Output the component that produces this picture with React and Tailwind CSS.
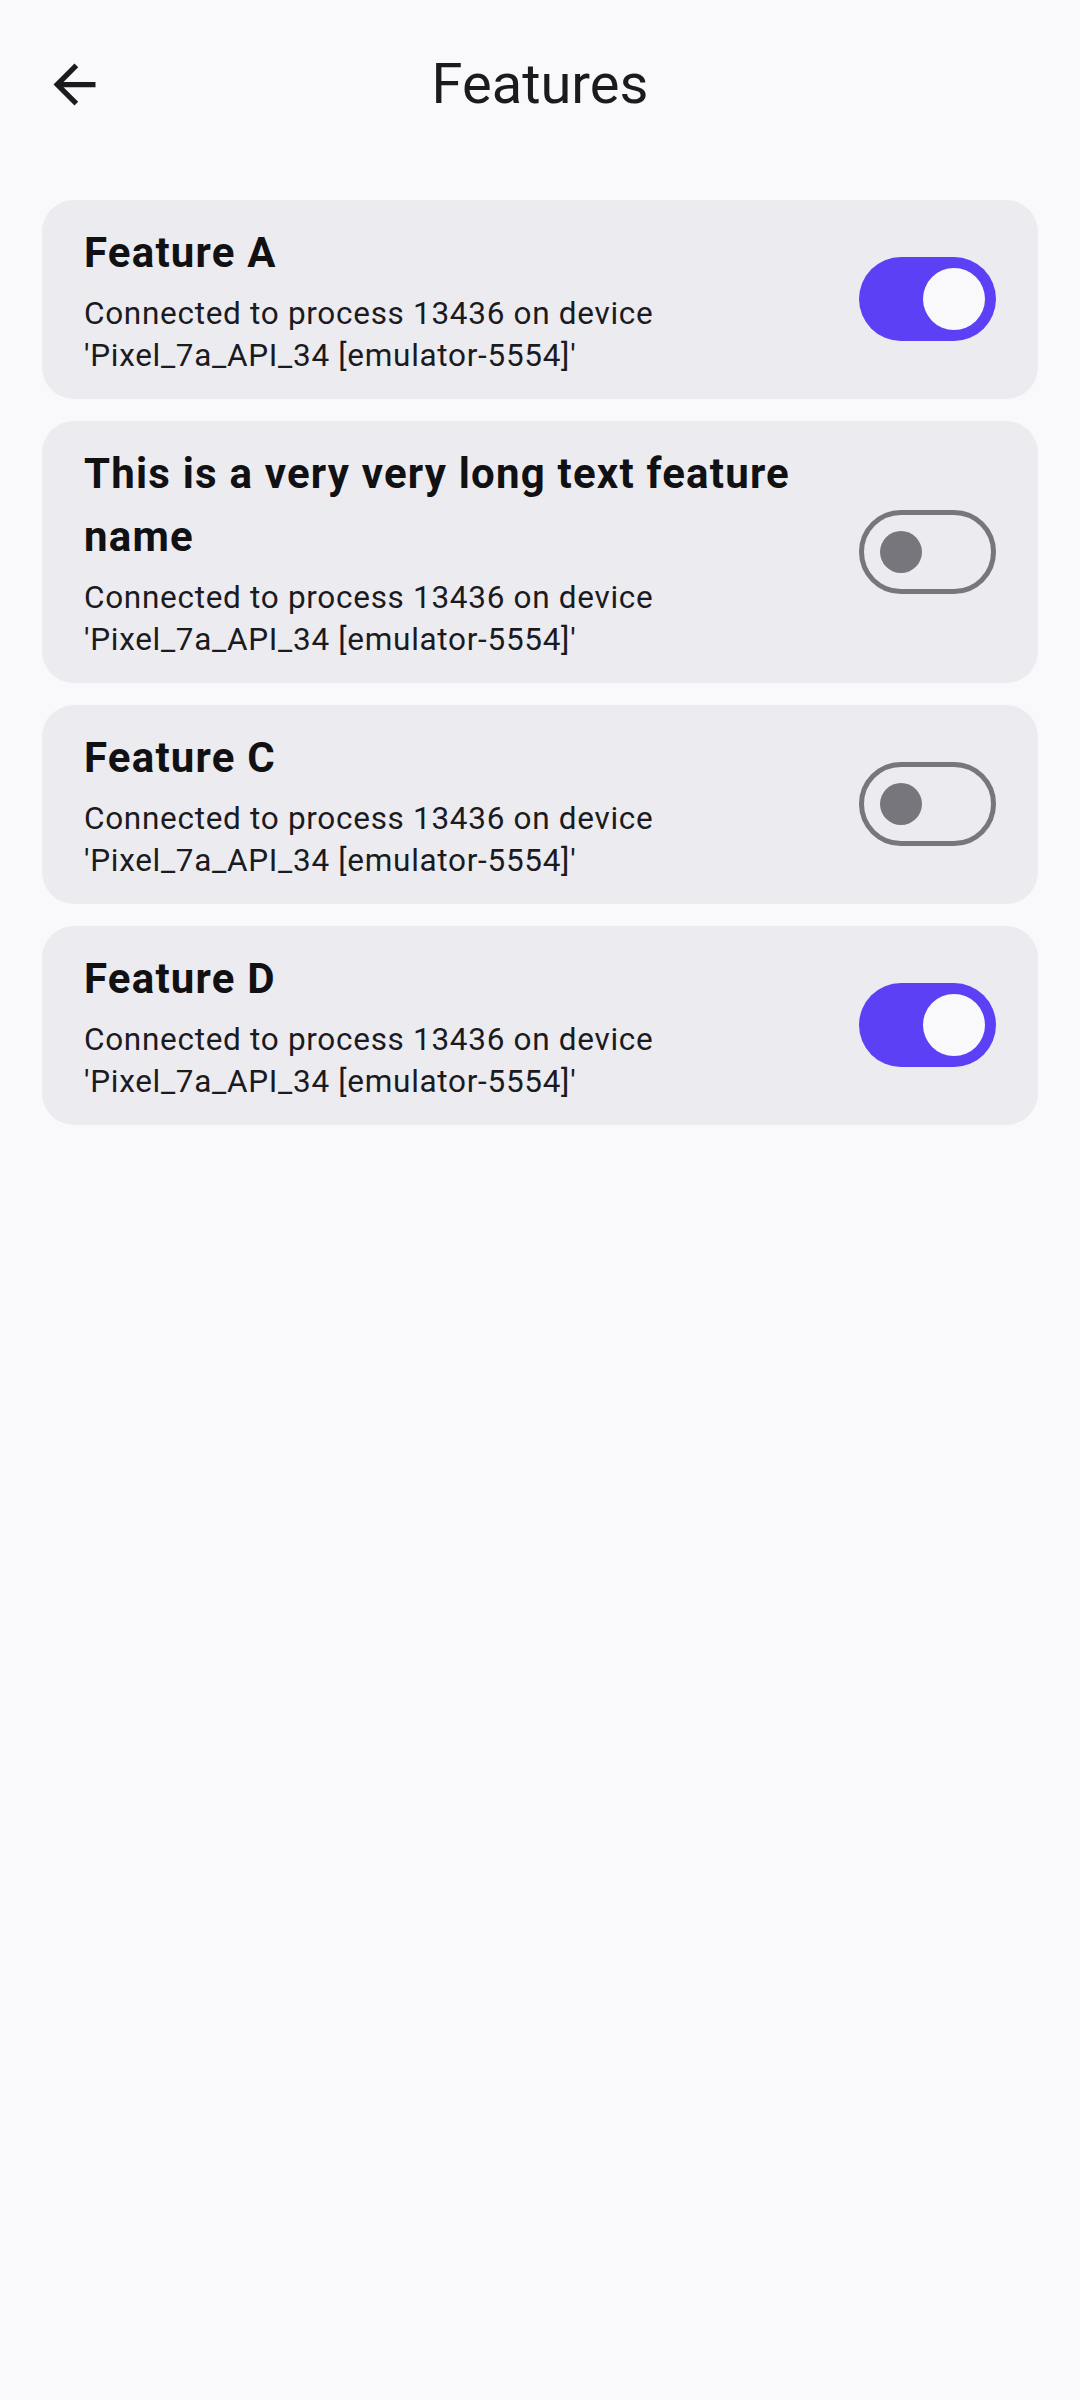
const features = [
  { name: 'Feature A', enabled: true },
  { name: 'This is a very very long text feature name', enabled: false },
  { name: 'Feature C', enabled: false },
  { name: 'Feature D', enabled: true },
];

const description = "Connected to process 13436 on device 'Pixel_7a_API_34 [emulator-5554]'";

function Toggle({ checked }) {
  if (checked) {
    return (
      <div className="flex h-[84px] w-[137px] shrink-0 items-center justify-end rounded-full bg-[#5b40f6] pr-[11px]">
        <div className="h-[62px] w-[62px] rounded-full bg-[#f9f9fb]" />
      </div>
    );
  }
  return (
    <div className="flex h-[84px] w-[137px] shrink-0 items-center rounded-full border-[5px] border-[#77767d] pl-[16px]">
      <div className="h-[42px] w-[42px] rounded-full bg-[#77767d]" />
    </div>
  );
}

function FeatureCard({ name, enabled }) {
  return (
    <div className="flex items-center gap-[42px] rounded-[32px] bg-[#ecebf0] pb-[22px] pl-[42px] pr-[42px] pt-[21px]">
      <div className="flex flex-1 flex-col">
        <div className="text-[42px] font-bold leading-[63px] tracking-[1.2px] text-[#111114]">{name}</div>
        <div className="mt-[9px] text-[31.5px] leading-[42px] tracking-[0.7px] text-[#1b1b1f]">{description}</div>
      </div>
      <Toggle checked={enabled} />
    </div>
  );
}

export default function App() {
  return (
    <div
      className="min-h-[2400px] w-[1080px] bg-[#f9f9fb]"
      style={{ fontFamily: 'Roboto, "Noto Sans", sans-serif' }}
    >
      <header className="relative flex h-[168px] items-center justify-center">
        <button className="absolute left-[43px] top-[53px] flex h-[63px] w-[63px] items-center justify-center text-[#1b1b1f]">
          <svg width="63" height="63" viewBox="0 0 24 24" fill="currentColor">
            <path d="M20 11H7.83l5.59-5.59L12 4l-8 8 8 8 1.41-1.41L7.83 13H20v-2z" />
          </svg>
        </button>
        <h1 className="text-[56px] leading-[73px] text-[#1b1b1f]">Features</h1>
      </header>

      <div className="mt-[32px] flex flex-col gap-[22px] px-[42px]">
        {features.map((f) => (
          <FeatureCard key={f.name} name={f.name} enabled={f.enabled} />
        ))}
      </div>
    </div>
  );
}
